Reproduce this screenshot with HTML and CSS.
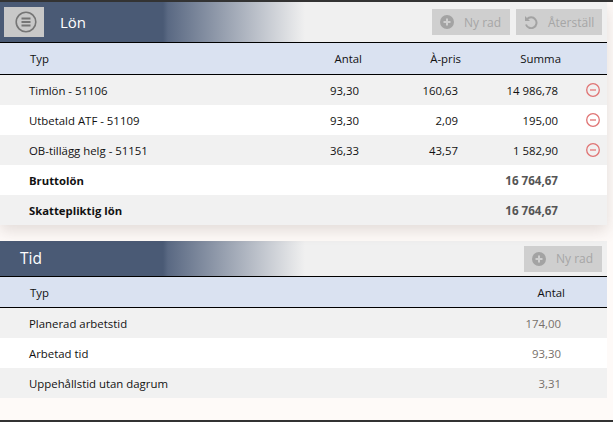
FILE: index.html
```html
<!DOCTYPE html>
<html lang="sv">
<head>
<meta charset="utf-8">
<title>Lön</title>
<link rel="stylesheet" href="styles.css">
</head>
<body>
<main class="page">
  <section class="panel panel-lon">
    <header class="head">
      <div class="title-wrap">
        <button class="menu-btn" aria-label="Meny">
          <svg width="22" height="22" viewBox="0 0 22 22"><circle cx="11" cy="11" r="9.8" fill="none" stroke="#757575" stroke-width="1.6"/><path d="M6.5 7.5h9M6.5 11h9M6.5 14.5h9" stroke="#757575" stroke-width="1.8" fill="none"/></svg>
        </button>
        <h2 class="title title-lon">Lön</h2>
      </div>
      <div class="actions">
        <span class="btn btn-add"><svg width="14" height="14" viewBox="0 0 14 14"><circle cx="7" cy="7" r="7" fill="#a3a3a3"/><path d="M7 3.5v7M3.5 7h7" stroke="#cfcfcf" stroke-width="2"/></svg>Ny rad</span>
        <span class="btn btn-reset"><svg width="14" height="14" viewBox="0 0 14 14"><path d="M3 4.2A5.4 5.4 0 1 1 2 9.5" fill="none" stroke="#a3a3a3" stroke-width="2"/><path d="M1 1v5h5z" fill="#a3a3a3"/></svg>Återställ</span>
      </div>
    </header>
    <div class="row row-head lon-grid"><span>Typ</span><span class="n">Antal</span><span class="n">À-pris</span><span class="n">Summa</span><span></span></div>
    <div class="row grey lon-grid"><span>Timlön - 51106</span><span class="n v">93,30</span><span class="n v">160,63</span><span class="n v">14 986,78</span><span class="rm"><svg width="14" height="14" viewBox="0 0 14 14"><circle cx="7" cy="7" r="6.3" fill="none" stroke="#e07474" stroke-width="1.3"/><path d="M4 7h6" stroke="#e89a9a" stroke-width="1.8"/></svg></span></div>
    <div class="row lon-grid"><span>Utbetald ATF - 51109</span><span class="n v">93,30</span><span class="n v">2,09</span><span class="n v">195,00</span><span class="rm"><svg width="14" height="14" viewBox="0 0 14 14"><circle cx="7" cy="7" r="6.3" fill="none" stroke="#e07474" stroke-width="1.3"/><path d="M4 7h6" stroke="#e89a9a" stroke-width="1.8"/></svg></span></div>
    <div class="row grey lon-grid"><span>OB-tillägg helg - 51151</span><span class="n v">36,33</span><span class="n v">43,57</span><span class="n v">1 582,90</span><span class="rm"><svg width="14" height="14" viewBox="0 0 14 14"><circle cx="7" cy="7" r="6.3" fill="none" stroke="#e07474" stroke-width="1.3"/><path d="M4 7h6" stroke="#e89a9a" stroke-width="1.8"/></svg></span></div>
    <div class="row total lon-grid"><span>Bruttolön</span><span></span><span></span><span class="n v sum">16 764,67</span><span></span></div>
    <div class="row total grey lon-grid"><span>Skattepliktig lön</span><span></span><span></span><span class="n v sum">16 764,67</span><span></span></div>
  </section>
  <section class="panel panel-tid">
    <header class="head">
      <h2 class="title title-tid">Tid</h2>
      <div class="actions">
        <span class="btn btn-add"><svg width="14" height="14" viewBox="0 0 14 14"><circle cx="7" cy="7" r="7" fill="#a3a3a3"/><path d="M7 3.5v7M3.5 7h7" stroke="#cfcfcf" stroke-width="2"/></svg>Ny rad</span>
      </div>
    </header>
    <div class="row row-head tid-grid"><span>Typ</span><span class="n">Antal</span></div>
    <div class="row grey tid-grid"><span>Planerad arbetstid</span><span class="n tv">174,00</span></div>
    <div class="row tid-grid"><span>Arbetad tid</span><span class="n tv">93,30</span></div>
    <div class="row grey tid-grid"><span>Uppehållstid utan dagrum</span><span class="n tv">3,31</span></div>
  </section>
</main>
</body>
</html>
```
FILE: styles.css
```css
* { box-sizing: border-box; }
html, body { margin: 0; height: 100%; }
body {
  width: 613px; height: 422px; overflow: hidden;
  background: #fefaf8;
  border-top: 2px solid #333;
  border-bottom: 2px solid #333;
  font-family: "Open Sans", "Liberation Sans", sans-serif;
  font-size: 11.4px; color: #111;
}
.page { width: 607px; }
.panel { background: #fff; }
.panel-lon { box-shadow: 0 6px 14px rgba(90, 70, 60, .16); position: relative; }
.panel-tid { margin-top: 16px; }
.head {
  height: 41px; display: flex; align-items: center; justify-content: space-between;
  padding-right: 5px;
  background: linear-gradient(90deg, #4a5a75 0, #4a5a75 163px, #5a6983 168px, #f0f0f0 305px);
  border-bottom: 1px solid #000;
}
.panel-tid .head { height: 36px; }
.title-wrap { display: flex; align-items: center; }
.menu-btn {
  width: 40px; height: 30px; margin-left: 4px; padding: 0 0 0 3px; border: 0;
  background: #c8c8c8; display: flex; align-items: center; justify-content: center;
}
.title { margin: 0; color: #fff; font-size: 15px; font-weight: 400; line-height: 20px; }
.title-lon { margin-left: 16px; }
.title-tid { margin-left: 20px; font-size: 15.5px; padding-bottom: 2px; }
.actions { display: flex; gap: 6px; }
.btn {
  width: 78px; height: 26px; background: #cfcfcf; color: #a6a6a6; font-size: 12px;
  display: flex; align-items: center; gap: 10px; padding: 0 0 0 8px;
}
.btn-reset { width: 86px; }
.row { height: 30px; display: grid; align-items: center; background: #fff; padding-left: 29px; }
.row.grey { background: #f1f1f1; }
.row.row-head { height: 32px; background: #dae2f1; border-bottom: 1px solid #000; padding-left: 30px; }
.panel-tid .row.row-head { height: 31px; }
.lon-grid { grid-template-columns: 274px 59px 99px 100px 46px; }
.row-head.lon-grid { grid-template-columns: 273px 59px 99px 100px 46px; }
.tid-grid { grid-template-columns: 476px 60px; }
.row-head.tid-grid { grid-template-columns: 475px 60px; }
.n { text-align: right; }
.v { padding-right: 3px; }
.total { font-weight: 700; font-size: 11.3px; }
.sum { color: #555; font-size: 11.6px; }
.tv { color: #77706a; padding-right: 4px; }
.rm { display: flex; justify-content: flex-end; padding-right: 7px; }
```
